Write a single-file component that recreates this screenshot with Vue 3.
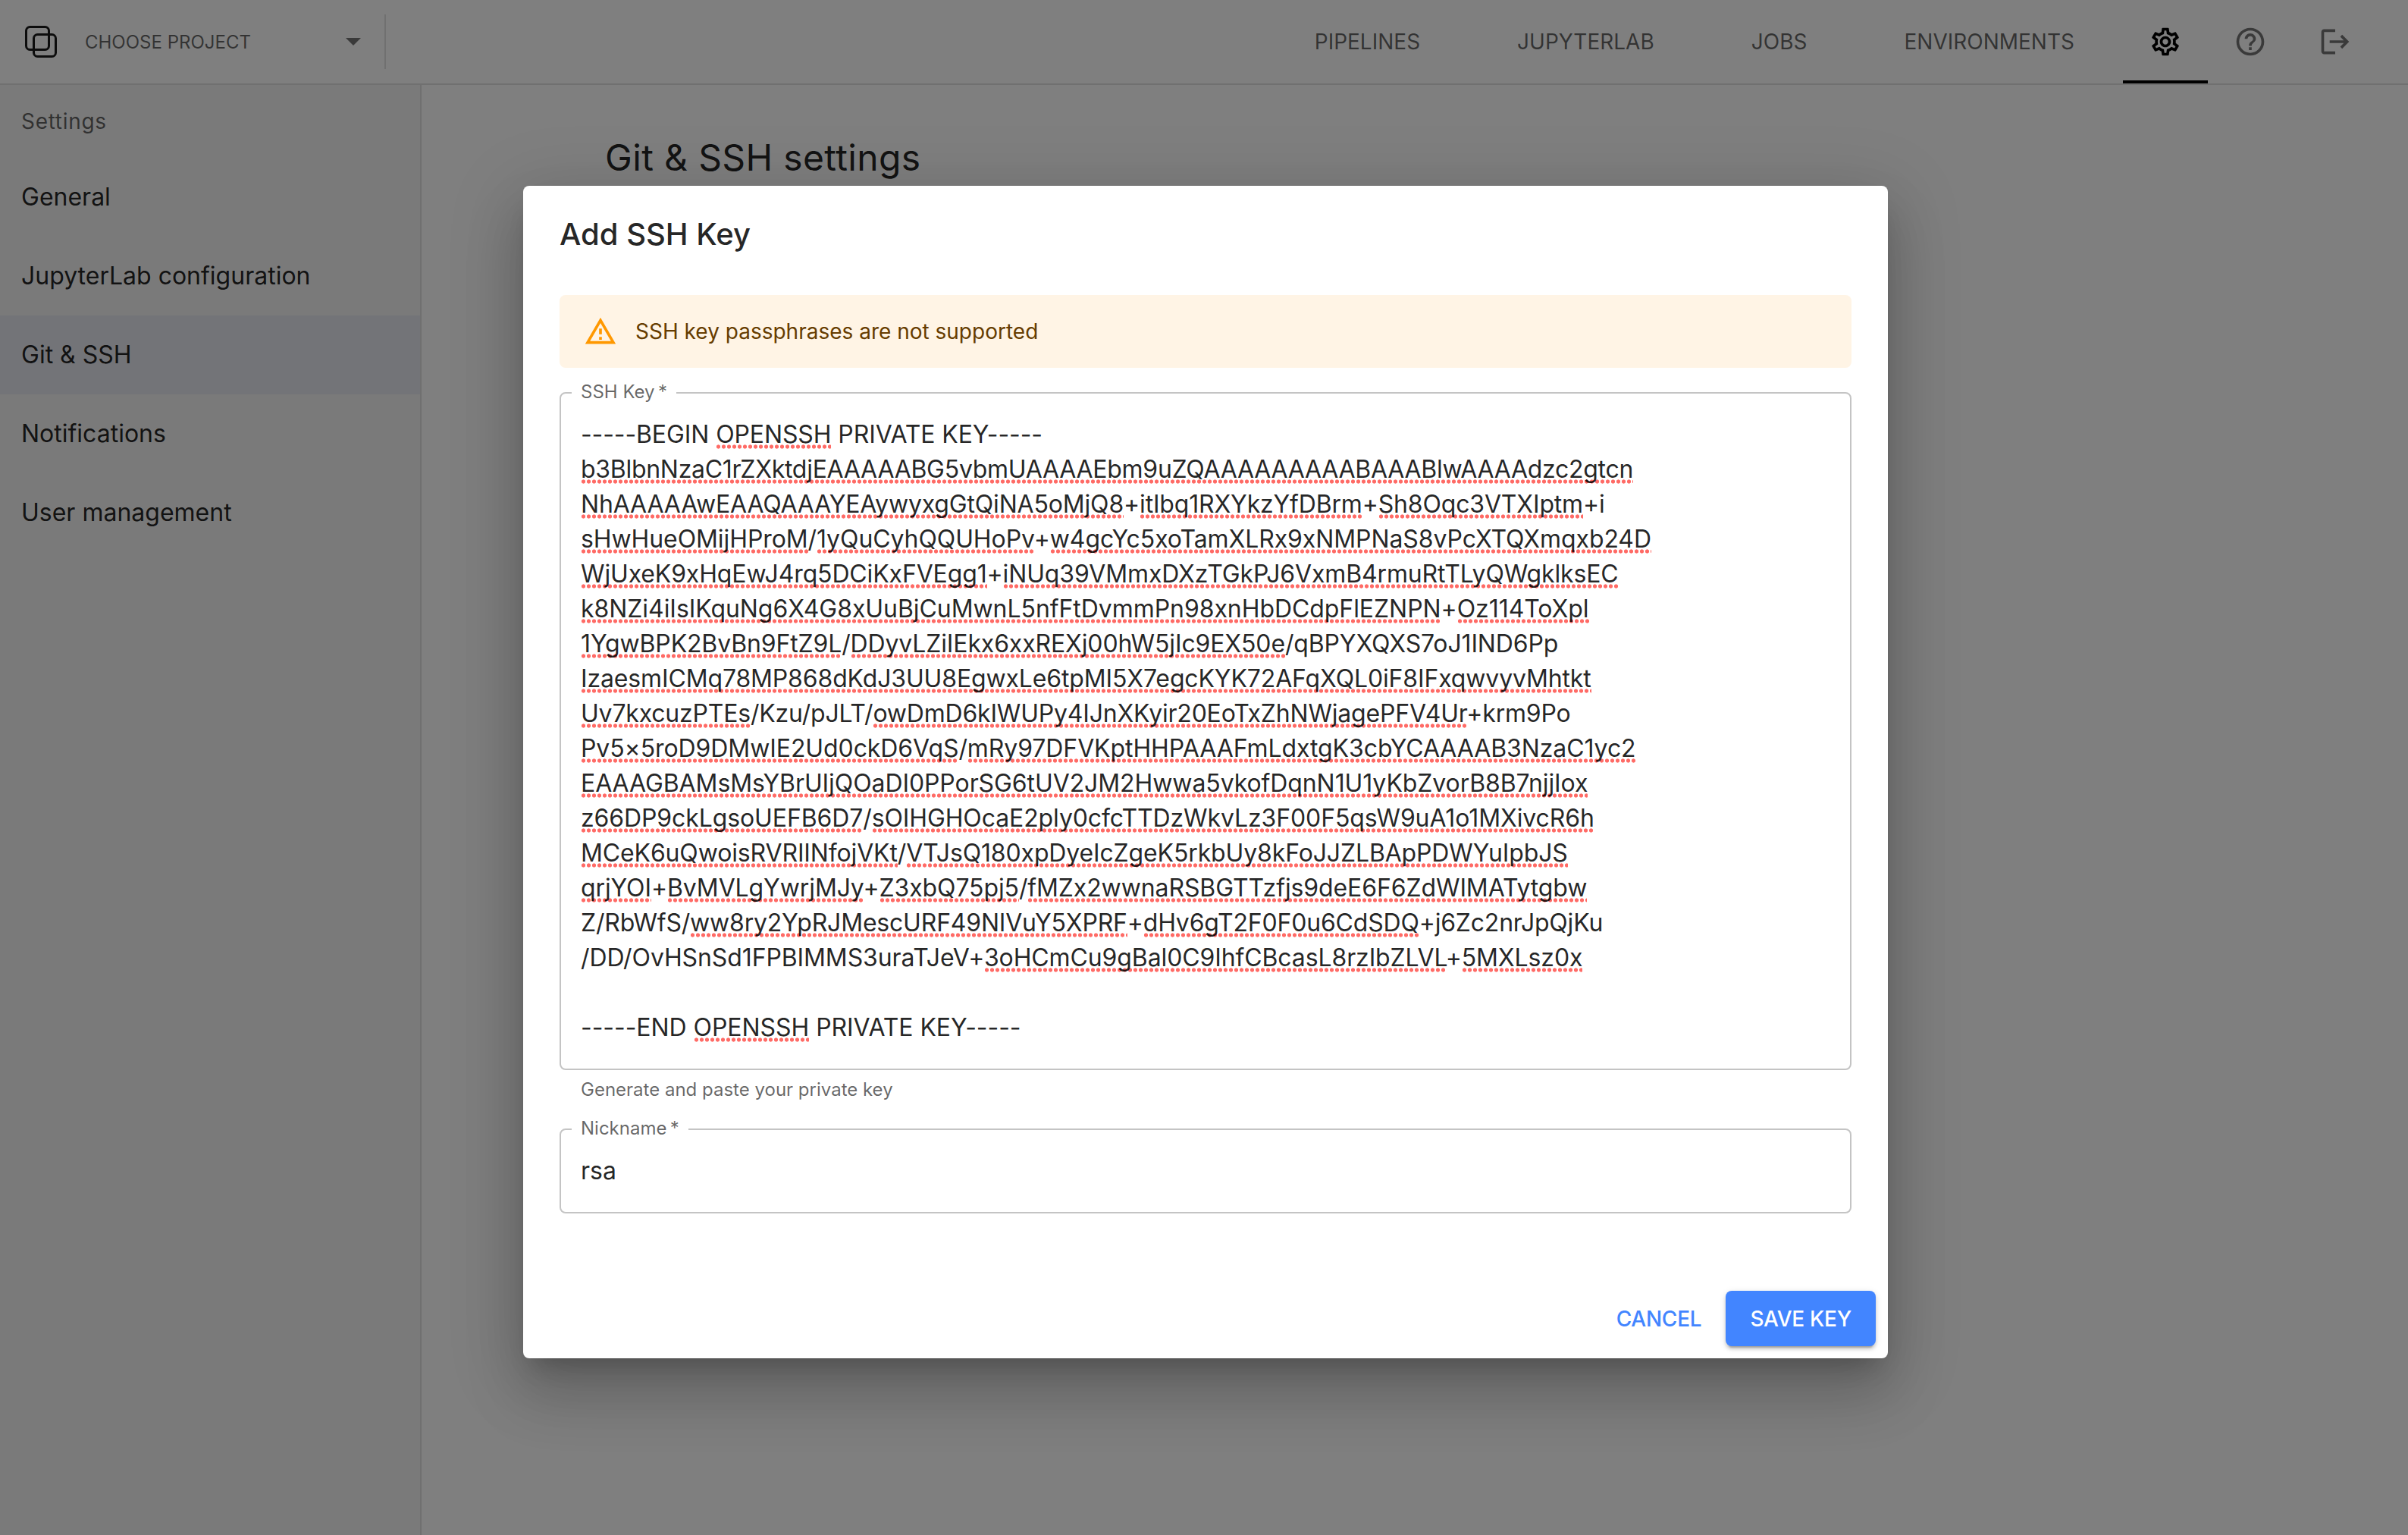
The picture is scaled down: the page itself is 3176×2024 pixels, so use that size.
<script setup>
const navItems = ['Pipelines', 'JupyterLab', 'Jobs', 'Environments']
const menu = [
  { label: 'General' },
  { label: 'JupyterLab configuration' },
  { label: 'Git & SSH', active: true },
  { label: 'Notifications' },
  { label: 'User management' },
]
// Segments: [text, isFlaggedBySpellcheck]; spacing is the line's tracking in px
const keyLines = [
  { spacing: -0.11, segs: [['-----BEGIN ', 0], ['OPENSSH', 1], [' PRIVATE KEY-----', 0]] },
  { spacing: -0.28, segs: [['b3BlbnNzaC1rZXktdjEAAAAABG5vbmUAAAAEbm9uZQAAAAAAAAABAAABlwAAAAdzc2gtcn', 1]] },
  { spacing: -0.17, segs: [['NhAAAAAwEAAQAAAYEAywyxgGtQiNA5oMjQ8', 1], ['+', 0], ['itIbq1RXYkzYfDBrm', 1], ['+', 0], ['Sh8Oqc3VTXIptm', 1], ['+i', 0]] },
  { spacing: -0.09, segs: [['sHwHueOMijHProM', 1], ['/', 0], ['1yQuCyhQQUHoPv', 1], ['+', 0], ['w4gcYc5xoTamXLRx9xNMPNaS8vPcXTQXmqxb24D', 1]] },
  { spacing: -0.14, segs: [['WjUxeK9xHqEwJ4rq5DCiKxFVEgg1', 1], ['+', 0], ['iNUq39VMmxDXzTGkPJ6VxmB4rmuRtTLyQWgklksEC', 1]] },
  { spacing: -0.06, segs: [['k8NZi4iIsIKquNg6X4G8xUuBjCuMwnL5nfFtDvmmPn98xnHbDCdpFlEZNPN', 1], ['+', 0], ['Oz114ToXpl', 1]] },
  { spacing: -0.14, segs: [['1YgwBPK2BvBn9FtZ9L', 1], ['/', 0], ['DDyvLZiIEkx6xxREXj00hW5jIc9EX50e', 1], ['/qBPYXQXS7oJ1IND6Pp', 0]] },
  { spacing: -0.14, segs: [['IzaesmICMq78MP868dKdJ3UU8EgwxLe6tpMI5X7egcKYK72AFqXQL0iF8IFxqwvyvMhtkt', 1]] },
  { spacing: -0.2, segs: [['Uv7kxcuzPTEs', 1], ['/Kzu/pJLT/', 0], ['owDmD6kIWUPy4IJnXKyir20EoTxZhNWjagePFV4Ur', 1], ['+krm9Po', 0]] },
  { spacing: -0.09, segs: [['Pv5\u00d75roD9DMwIE2Ud0ckD6VqS', 1], ['/', 0], ['mRy97DFVKptHHPAAAFmLdxtgK3cbYCAAAAB3NzaC1yc2', 1]] },
  { spacing: -0.09, segs: [['EAAAGBAMsMsYBrUIjQOaDI0PPorSG6tUV2JM2Hwwa5vkofDqnN1U1yKbZvorB8B7njjIox', 1]] },
  { spacing: -0.11, segs: [['z66DP9ckLgsoUEFB6D7', 1], ['/', 0], ['sOIHGHOcaE2ply0cfcTTDzWkvLz3F00F5qsW9uA1o1MXivcR6h', 1]] },
  { spacing: -0.14, segs: [['MCeK6uQwoisRVRIINfojVKt', 1], ['/', 0], ['VTJsQ180xpDyeIcZgeK5rkbUy8kFoJJZLBApPDWYuIpbJS', 1]] },
  { spacing: -0.11, segs: [['qrjYOI', 1], ['+', 0], ['BvMVLgYwrjMJy', 1], ['+', 0], ['Z3xbQ75pj5', 1], ['/', 0], ['fMZx2wwnaRSBGTTzfjs9deE6F6ZdWIMATytgbw', 1]] },
  { spacing: -0.2, segs: [['Z/RbWfS/', 0], ['ww8ry2YpRJMescURF49NIVuY5XPRF', 1], ['+', 0], ['dHv6gT2F0F0u6CdSDQ', 1], ['+j6Zc2nrJpQjKu', 0]] },
  { spacing: -0.11, segs: [['/DD/OvHSnSd1FPBIMMS3uraTJeV+', 0], ['3oHCmCu9gBal0C9IhfCBcasL8rzIbZLVL', 1], ['+', 0], ['5MXLsz0x', 1]] },
  { spacing: 0, segs: [['\u00a0', 0]] },
  { spacing: -0.06, segs: [['-----END ', 0], ['OPENSSH', 1], [' PRIVATE KEY-----', 0]] },
]
</script>

<template>
  <div class="app">
    <header class="topbar">
      <svg class="logo" viewBox="0 0 42 42" fill="none" stroke="#1a1a1a" stroke-width="3">
        <rect x="1.5" y="1.5" width="30" height="30" rx="5" />
        <rect x="11.5" y="11.5" width="29" height="29" rx="5" />
      </svg>
      <div class="project">
        <span class="project-label">CHOOSE PROJECT</span>
        <span class="caret"></span>
      </div>
      <div class="divider"></div>
      <nav class="nav">
        <a v-for="item in navItems" :key="item" class="nav-link">{{ item }}</a>
      </nav>
      <div class="nav-icons">
        <div class="nav-icon active">
          <svg viewBox="0 0 24 24"><path d="M19.43 12.98c.04-.32.07-.64.07-.98 0-.34-.03-.66-.07-.98l2.11-1.65c.19-.15.24-.42.12-.64l-2-3.46c-.09-.16-.26-.25-.44-.25-.06 0-.12.01-.17.03l-2.49 1c-.52-.4-1.08-.73-1.69-.98l-.38-2.65C14.46 2.18 14.25 2 14 2h-4c-.25 0-.46.18-.49.42l-.38 2.65c-.61.25-1.17.59-1.69.98l-2.49-1c-.06-.02-.12-.03-.18-.03-.17 0-.34.09-.43.25l-2 3.46c-.13.22-.07.49.12.64l2.11 1.65c-.04.32-.07.65-.07.98 0 .33.03.66.07.98l-2.11 1.65c-.19.15-.24.42-.12.64l2 3.46c.09.16.26.25.44.25.06 0 .12-.01.17-.03l2.49-1c.52.4 1.08.73 1.69.98l.38 2.65c.03.24.24.42.49.42h4c.25 0 .46-.18.49-.42l.38-2.65c.61-.25 1.17-.59 1.69-.98l2.49 1c.06.02.12.03.18.03.17 0 .34-.09.43-.25l2-3.46c.12-.22.07-.49-.12-.64l-2.11-1.65zm-1.98-1.71c.04.31.05.52.05.73 0 .21-.02.43-.05.73l-.14 1.13.89.7 1.08.84-.7 1.21-1.27-.51-1.04-.42-.9.68c-.43.32-.84.56-1.25.73l-1.06.43-.16 1.13-.2 1.35h-1.4l-.19-1.35-.16-1.13-1.06-.43c-.43-.18-.83-.41-1.23-.71l-.91-.7-1.06.43-1.27.51-.7-1.21 1.08-.84.89-.7-.14-1.13c-.03-.31-.05-.54-.05-.74s.02-.43.05-.73l.14-1.13-.89-.7-1.08-.84.7-1.21 1.27.51 1.04.42.9-.68c.43-.32.84-.56 1.25-.73l1.06-.43.16-1.13.2-1.35h1.39l.19 1.35.16 1.13 1.06.43c.43.18.83.41 1.23.71l.91.7 1.06-.43 1.27-.51.7 1.21-1.07.85-.89.7.14 1.13zM12 8c-2.21 0-4 1.79-4 4s1.79 4 4 4 4-1.79 4-4-1.79-4-4-4zm0 6c-1.1 0-2-.9-2-2s.9-2 2-2 2 .9 2 2-.9 2-2 2z" /></svg>
        </div>
        <div class="nav-icon">
          <svg viewBox="0 0 24 24"><path d="M11 18h2v-2h-2v2zm1-16C6.48 2 2 6.48 2 12s4.48 10 10 10 10-4.48 10-10S17.52 2 12 2zm0 18c-4.41 0-8-3.59-8-8s3.59-8 8-8 8 3.59 8 8-3.59 8-8 8zm0-14c-2.21 0-4 1.79-4 4h2c0-1.1.9-2 2-2s2 .9 2 2c0 2-3 1.75-3 5h2c0-2.25 3-2.5 3-5 0-2.21-1.79-4-4-4z" /></svg>
        </div>
        <div class="nav-icon">
          <svg viewBox="0 0 24 24"><path d="M17 7l-1.41 1.41L18.17 11H8v2h10.17l-2.58 2.58L17 17l5-5zM4 5h8V3H4c-1.1 0-2 .9-2 2v14c0 1.1.9 2 2 2h8v-2H4V5z" /></svg>
        </div>
      </div>
    </header>

    <div class="body">
      <aside class="sidebar">
        <div class="subheader">Settings</div>
        <div v-for="m in menu" :key="m.label" class="menu-item" :class="{ selected: m.active }">{{ m.label }}</div>
      </aside>
      <main class="content">
        <h1 class="page-title">Git &amp; SSH settings</h1>
      </main>
    </div>

    <div class="backdrop">
      <section class="dialog">
        <h2 class="dialog-title">Add SSH Key</h2>
        <div class="dialog-body">
          <div class="alert">
            <svg class="alert-icon" viewBox="0 0 24 24"><path d="M12 5.99L19.53 19H4.47L12 5.99M12 2L1 21h22L12 2zm1 14h-2v2h2v-2zm0-6h-2v4h2v-4z" /></svg>
            <span>SSH key passphrases are not supported</span>
          </div>
          <div class="field key-field">
            <label class="field-label">SSH Key&#8201;*</label>
            <div class="field-value">
              <div v-for="(line, i) in keyLines" :key="i" class="key-line" :style="{ letterSpacing: line.spacing + 'px' }"><template v-for="(seg, j) in line.segs" :key="j"><span v-if="seg[1]" class="flagged">{{ seg[0] }}</span><template v-else>{{ seg[0] }}</template></template></div>
            </div>
          </div>
          <p class="helper">Generate and paste your private key</p>
          <div class="field nick-field">
            <label class="field-label">Nickname&#8201;*</label>
            <div class="field-value">rsa</div>
          </div>
        </div>
        <footer class="dialog-actions">
          <button class="btn btn-text">Cancel</button>
          <button class="btn btn-primary">Save key</button>
        </footer>
      </section>
    </div>
  </div>
</template>

<style>
html, body { margin: 0; padding: 0; background: #fff; }
</style>

<style scoped>
.app {
  position: relative;
  width: 3176px;
  height: 2024px;
  overflow: hidden;
  display: flex;
  flex-direction: column;
  font-family: Inter, "Liberation Sans", sans-serif;
  color: rgba(0, 0, 0, 0.87);
  background: #fff;
}
.topbar {
  height: 112px;
  box-sizing: border-box;
  flex: none;
  display: flex;
  align-items: center;
  border-bottom: 2px solid #e0e0e0;
  padding-left: 33px;
  background: #fff;
}
.logo { width: 42px; height: 42px; flex: none; }
.project {
  width: 364px;
  margin: 0 31px 0 37px;
  display: flex;
  align-items: center;
  justify-content: space-between;
}
.project-label { font-size: 24px; color: rgba(0, 0, 0, 0.6); }
.caret {
  width: 0;
  height: 0;
  border-left: 10px solid transparent;
  border-right: 10px solid transparent;
  border-top: 10px solid rgba(0, 0, 0, 0.54);
}
.divider { width: 2px; height: 72px; background: #e0e0e0; }
.nav { margin-left: auto; display: flex; }
.nav-link {
  padding: 0 64px;
  font-size: 28px;
  text-transform: uppercase;
  color: rgba(0, 0, 0, 0.6);
}
.nav-icons { display: flex; margin-right: 40px; }
.nav-icon {
  width: 112px;
  height: 110px;
  box-sizing: border-box;
  display: flex;
  align-items: center;
  justify-content: center;
}
.nav-icon svg { width: 44px; height: 44px; fill: rgba(0, 0, 0, 0.54); }
.nav-icon.active { border-bottom: 4px solid #000; padding-top: 4px; }
.nav-icon.active svg { fill: #000; }

.body { flex: 1; display: flex; min-height: 0; }
.sidebar {
  width: 556px;
  box-sizing: border-box;
  flex: none;
  background: #f5f5f5;
  border-right: 2px solid #e0e0e0;
}
.subheader {
  height: 96px;
  display: flex;
  align-items: center;
  padding-left: 28px;
  font-size: 28px;
  letter-spacing: 0.7px;
  color: rgba(0, 0, 0, 0.6);
}
.menu-item {
  height: 104px;
  box-sizing: border-box;
  display: flex;
  align-items: center;
  padding: 0 0 2px 28px;
  font-size: 32px;
}
.menu-item.selected { background: #e7e9f0; }
.content { flex: 1; padding: 67px 0 0 242px; }
.page-title { margin: 0; font-size: 48px; font-weight: 400; line-height: 1.2; letter-spacing: 0.35px; }

.backdrop {
  position: absolute;
  inset: 0;
  background: rgba(0, 0, 0, 0.5);
  display: flex;
  justify-content: center;
  align-items: flex-start;
  padding: 245px 0 0 4px;
}
.dialog {
  width: 1800px;
  height: 1546px;
  box-sizing: border-box;
  background: #fff;
  border-radius: 8px;
  display: flex;
  flex-direction: column;
  box-shadow: 0 22px 30px -14px rgba(0, 0, 0, 0.2), 0 48px 76px 6px rgba(0, 0, 0, 0.14), 0 18px 92px 16px rgba(0, 0, 0, 0.12);
}
.dialog-title {
  margin: 0;
  padding: 32px 48px;
  font-size: 40px;
  font-weight: 500;
  line-height: 64px;
}
.dialog-body { flex: 1; padding: 16px 48px 0; display: flex; flex-direction: column; }
.alert {
  height: 96px;
  box-sizing: border-box;
  display: flex;
  align-items: center;
  padding: 0 32px;
  background: #fff4e5;
  border-radius: 8px;
  color: #663c00;
  font-size: 28px;
}
.alert-icon { width: 44px; height: 44px; fill: #ff9800; margin-right: 24px; flex: none; }
.field {
  position: relative;
  border: 2px solid #c4c4c4;
  border-radius: 8px;
  padding: 31px 26px;
  font-size: 32px;
  line-height: 46px;
}
.key-field { margin-top: 32px; }
.nick-field { margin-top: 31px; }
.field-label {
  position: absolute;
  top: -16px;
  left: 14px;
  padding: 0 12px;
  background: #fff;
  font-size: 24px;
  line-height: 28px;
  color: rgba(0, 0, 0, 0.6);
}
.key-line { white-space: pre; height: 46px; }
.flagged {
  background: radial-gradient(circle at center, #ff6b66 2.3px, transparent 2.9px) 0 100% / 7px 6px repeat-x;
}
.helper {
  margin: 6px 0 0;
  padding-left: 28px;
  font-size: 24px;
  line-height: 40px;
  color: rgba(0, 0, 0, 0.6);
}
.dialog-actions {
  padding: 16px;
  display: flex;
  justify-content: flex-end;
  gap: 16px;
}
.btn {
  height: 73px;
  border: 0;
  border-radius: 8px;
  background: none;
  font-family: inherit;
  font-size: 28px;
  font-weight: 500;
  letter-spacing: -0.25px;
  text-transform: uppercase;
  cursor: pointer;
}
.btn-text { padding: 0 16px; color: #4285ff; }
.btn-primary {
  padding: 0 32px;
  background: #4285ff;
  color: #fff;
  box-shadow: 0 6px 2px -4px rgba(0, 0, 0, 0.2), 0 4px 4px 0 rgba(0, 0, 0, 0.14), 0 2px 10px 0 rgba(0, 0, 0, 0.12);
}
</style>
